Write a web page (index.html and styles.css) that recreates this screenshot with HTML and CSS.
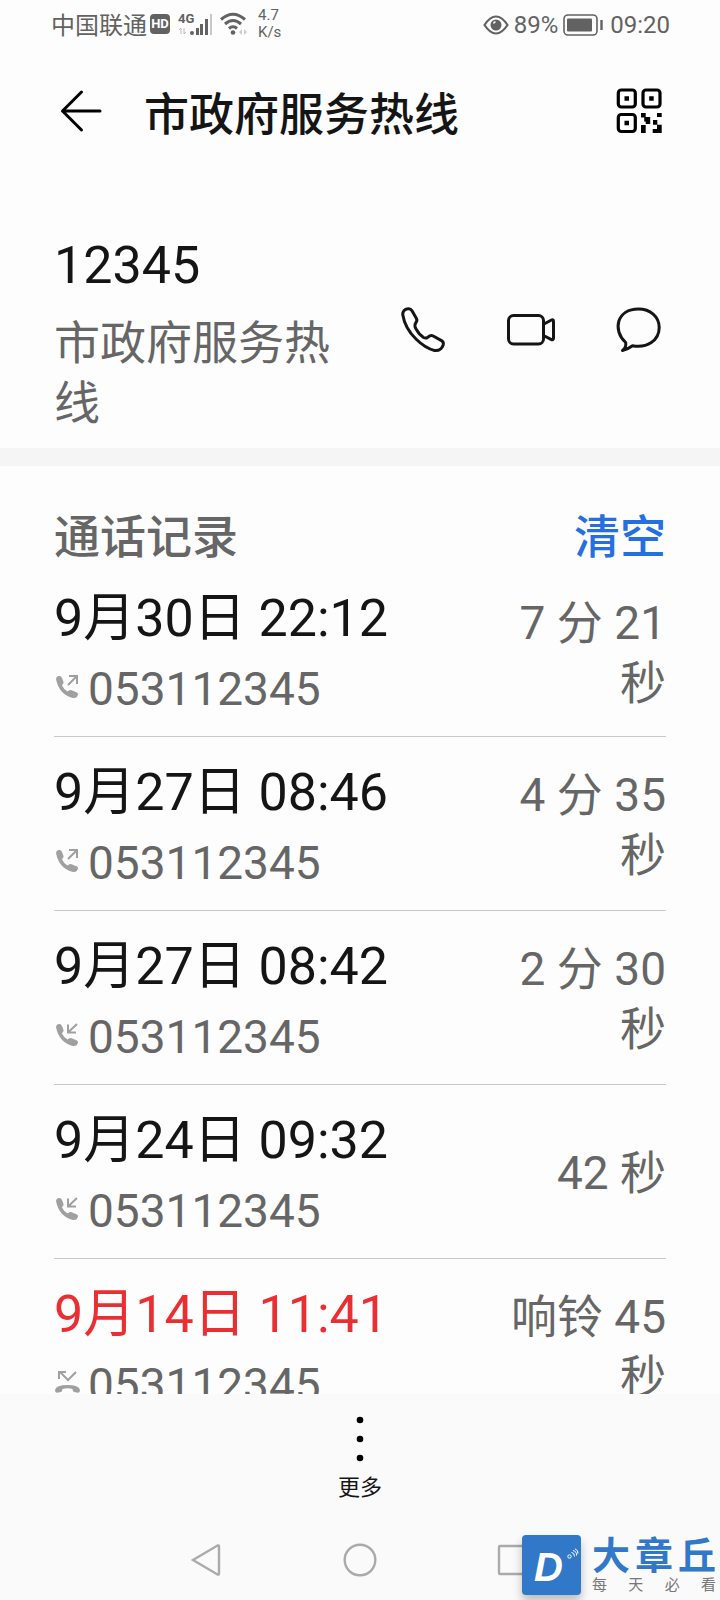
FILE: index.html
```html
<!DOCTYPE html>
<html lang="zh-CN">
<head>
<meta charset="utf-8">
<meta name="viewport" content="width=device-width, initial-scale=1">
<title>市政府服务热线</title>
<link rel="stylesheet" href="styles.css">
</head>
<body>
<div class="screen">
  <div class="status">
    <div class="status-group">
      <span class="carrier">中国联通</span>
      <span class="hd">HD</span>
      <svg class="signal" width="36" height="26" viewBox="0 0 36 26" aria-hidden="true">
        <text x="0" y="12" class="net">4G</text>
        <g fill="#626262"><circle cx="14" cy="22" r="2"/><rect x="18" y="17" width="3" height="7"/><rect x="22" y="13" width="3" height="11"/><rect x="27" y="8" width="3" height="16"/></g>
        <rect x="32" y="3" width="2" height="21" fill="#c8c8c8"/>
        <path d="M3 23v-6l-2 2M6 17v6l2-2" fill="none" stroke="#bbb"/>
      </svg>
      <svg class="wifi" width="28" height="24" viewBox="0 0 28 24" aria-hidden="true">
        <g fill="none" stroke="#626262" stroke-width="3"><path d="M1 7.500Q13-3 25 7.500"/><path d="M5 12Q13 5 21 12"/><path d="M9 16.500Q13 13 17 16.500"/></g>
        <circle cx="13" cy="20.500" r="2.300" fill="#626262"/>
        <path d="M22 17l-3 3 3 3zM24 17l3 3-3 3z" fill="#ccc"/>
      </svg>
      <span class="speed">4.7<br>K/s</span>
    </div>
    <div class="status-group right">
      <svg width="26" height="20" viewBox="0 0 26 20" aria-hidden="true"><path d="M1.500 10Q7 1.500 13 1.500T24.500 10Q19 18.500 13 18.500T1.500 10z" fill="none" stroke="#626262" stroke-width="2.200"/><circle cx="13" cy="10" r="5.500" fill="#626262"/><path d="M10.500 8.500a3 3 0 0 1 2-1.800" fill="none" stroke="#fff" stroke-width="1.500"/></svg>
      <span>89%</span>
      <svg width="40" height="22" viewBox="0 0 40 22" aria-hidden="true"><rect x="1" y="1" width="33" height="20" rx="4" fill="none" stroke="#626262" stroke-width="1.600"/><rect x="4" y="4.500" width="25" height="13" rx="1" fill="#626262"/><path d="M38.500 6v10" stroke="#626262" stroke-width="2.400"/></svg>
      <span class="clock">09:20</span>
    </div>
  </div>

  <header class="header">
    <button class="icon-btn" aria-label="返回"><svg viewBox="0 0 48 48"><path d="M27.500 4L8.500 23 27.500 42M8.500 23H46" stroke="#000" /></svg></button>
    <h1>市政府服务热线</h1>
    <button class="icon-btn" aria-label="二维码"><svg viewBox="0 0 48 48">
      <g stroke="#000" stroke-width="3.200"><rect x="2.300" y="2" width="17" height="17" rx="3"/><rect x="27" y="2" width="17" height="17" rx="3"/><rect x="2.300" y="26.500" width="17" height="17" rx="3"/></g>
      <path class="solid" d="M8.500 8.300h4.500v4.500h-4.500zM33.200 8.300h4.500v4.500h-4.500zM8.500 32.800h4.500v4.500h-4.500zM25 25h4.700v4h4.500v7h-4.500v9H25v-8h4.700v-3.500h-1.500v-4H25zM41 25h4.700v4H41zM37 32h4.300v4.700h4.400V45h-9v-4h4.300v-4.300h-4z"/>
    </svg></button>
  </header>

  <section class="contact">
    <div class="contact-info">
      <div class="number">12345</div>
      <div class="name">市政府服务热线</div>
    </div>
    <div class="actions">
      <button class="icon-btn" aria-label="拨打电话"><svg viewBox="0 0 48 48"><path d="M3.700 8.500Q4 3.500 8.800 2.800Q11.500 2.300 13 4.800L17.300 12.200Q18.500 14.300 17.200 16L16 18.500Q15.500 20.500 17 23Q20 28.500 24.500 31.500Q26.500 32.500 28 31.800L31 29.800Q32.500 29 34.200 30L42.500 34.600Q45 36.200 44.200 39Q42 45.300 35.500 44.500Q26 42 17 33Q6 22.500 3.700 8.500z"/></svg></button>
      <button class="icon-btn" aria-label="视频通话"><svg viewBox="0 0 48 48"><rect x="1.500" y="9.500" width="35" height="28.500" rx="5"/><path d="M36.500 18.300L44 14.300Q46.500 13 46.500 15.500V32Q46.500 34.500 44 33.300L36.500 29.500"/></svg></button>
      <button class="icon-btn" aria-label="发送信息"><svg viewBox="0 0 48 48"><path d="M10.700 36.500C-3 24 2 3 23.500 3C35 3 44.200 10.500 44.200 21.500C44.200 34.500 32 42.500 17.500 39.800Q12.500 43.500 7.500 44.500Q11.500 41.500 10.700 36.500z"/></svg></button>
    </div>
  </section>

  <main class="log">
    <div class="log-head"><h2>通话记录</h2><button class="clear">清空</button></div>
    <ul class="calls">
      <li class="call">
        <div class="call-main"><div class="date">9月30日 22:12</div><div class="line"><svg class="kind" viewBox="0 0 26 26" aria-label="呼出"><use href="#handset"/><path d="M14 12L23 3M15 3h8v8"/></svg><span>053112345</span></div></div>
        <div class="duration">7 分 21 秒</div>
      </li>
      <li class="call">
        <div class="call-main"><div class="date">9月27日 08:46</div><div class="line"><svg class="kind" viewBox="0 0 26 26" aria-label="呼出"><use href="#handset"/><path d="M14 12L23 3M15 3h8v8"/></svg><span>053112345</span></div></div>
        <div class="duration">4 分 35 秒</div>
      </li>
      <li class="call">
        <div class="call-main"><div class="date">9月27日 08:42</div><div class="line"><svg class="kind" viewBox="0 0 26 26" aria-label="呼入"><use href="#handset"/><path d="M23 3L14 11.500M14 3.500v8h8"/></svg><span>053112345</span></div></div>
        <div class="duration">2 分 30 秒</div>
      </li>
      <li class="call">
        <div class="call-main"><div class="date">9月24日 09:32</div><div class="line"><svg class="kind" viewBox="0 0 26 26" aria-label="呼入"><use href="#handset"/><path d="M23 3L14 11.500M14 3.500v8h8"/></svg><span>053112345</span></div></div>
        <div class="duration">42 秒</div>
      </li>
      <li class="call missed">
        <div class="call-main"><div class="date">9月14日 11:41</div><div class="line"><svg class="kind" viewBox="0 0 26 26" aria-label="未接"><path d="M22 3l-8 8-8-8M5 10V3h7"/><path class="solid" d="M1 21Q2 16 13.500 16T26 21q0 3-2 2.800l-4-.8q-1.500-.5-1.500-3-5-1.500-10 0 0 2.500-1.500 3l-4 .8Q1 24 1 21z"/></svg><span>053112345</span></div></div>
        <div class="duration">响铃 45 秒</div>
      </li>
    </ul>
  </main>

  <footer class="bottom">
    <button class="more">
      <svg width="8" height="46" viewBox="0 0 8 46" aria-hidden="true"><circle cx="4" cy="4" r="3.300"/><circle cx="4" cy="23" r="3.300"/><circle cx="4" cy="42" r="3.300"/></svg>
      <span>更多</span>
    </button>
    <nav class="nav">
      <button aria-label="后退"><svg viewBox="0 0 34 34"><path d="M4 17L28.500 2.500Q30 2 30 3.500v27q0 1.500-1.500 1z"/></svg></button>
      <button aria-label="主屏幕"><svg viewBox="0 0 34 34"><circle cx="17" cy="17" r="15.300"/></svg></button>
      <button aria-label="最近任务"><svg viewBox="0 0 34 34"><rect x="2" y="3" width="28" height="28" rx="1"/></svg></button>
    </nav>
  </footer>

  <div class="watermark">
    <div class="logo"><span>D</span><svg width="12" height="12" viewBox="0 0 12 12" aria-hidden="true"><circle cx="2.500" cy="8.500" r="1.700"/><path d="M4.500 4.500q3 0 3 4M6 2.500q4 1 3.500 5M8 .8q3.500 1.500 3 5"/></svg></div>
    <div class="brand">
      <div class="brand-name"><span>大</span><span>章</span><span>丘</span></div>
      <div class="slogan"><span>每</span><span>天</span><span>必</span><span>看</span></div>
    </div>
  </div>
</div>
<svg class="defs" aria-hidden="true"><symbol id="handset" viewBox="0 0 26 26"><path fill="#a0a0a0" stroke="none" d="M2 6Q2.500 2.500 6 3q1.300.3 2 2l1.500 4q.4 1.500-.8 2.300L8 12.500q1.500 3.500 5.500 6l1.500-1q1-.8 2.500-.3l5 2q1.800.7 1.500 2.300-1 4-5 3.500Q5 21.500 2 6z"/></symbol></svg>
</body>
</html>
```
FILE: styles.css
```css
* { box-sizing: border-box; }
body {
  margin: 0;
  background: #fdfdfd;
  color: #151515;
  font-family: Roboto, "Noto Sans CJK SC", sans-serif;
}
button {
  margin: 0;
  padding: 0;
  border: 0;
  background: none;
  color: inherit;
  font: inherit;
  cursor: pointer;
}
h1, h2, ul { margin: 0; padding: 0; }
svg { display: block; flex: none; }
.defs { position: absolute; width: 0; height: 0; }
.screen {
  position: relative;
  display: flex;
  flex-direction: column;
  height: 100vh;
  overflow: hidden;
}

.status {
  display: flex;
  justify-content: space-between;
  padding: 0 50px 0 51px;
  font-size: 24px;
  line-height: 48px;
  color: #626262;
}
.status-group { display: flex; align-items: center; height: 48px; }
.status-group.right { gap: 5px; padding-top: 1px; }
.carrier { padding-top: 4px; }
.clock { padding-left: 2px; }
.hd {
  width: 20px;
  margin: 0 8px 0 3px;
  border-radius: 4px;
  background: #626262;
  color: #fff;
  font-size: 13px;
  font-weight: 700;
  line-height: 20px;
  text-align: center;
}
.net { font: 700 13px "Roboto", sans-serif; fill: #626262; }
.wifi { margin: 0 10px 0 6px; }
.speed { font-size: 15px; line-height: 17px; }

.header {
  display: flex;
  align-items: center;
  padding: 36px 56px 36px 54px;
}
.header h1 {
  flex: 1;
  margin-left: 42px;
  padding-top: 8px;
  font-size: 45px;
  font-weight: 500;
  line-height: 48px;
}
.icon-btn { width: 48px; height: 48px; }
.icon-btn svg {
  width: 48px;
  height: 48px;
  fill: none;
  stroke: #151515;
  stroke-width: 3;
  stroke-linecap: round;
  stroke-linejoin: round;
}
.icon-btn .solid { fill: #000; stroke: none; }

.contact {
  display: flex;
  align-items: center;
  gap: 40px;
  padding: 60px 57px 15px 54px;
  border-bottom: 18px solid #f5f5f5;
}
.contact-info { flex: 1; }
.number { margin-bottom: 17px; font-size: 52px; line-height: 60px; }
.name { color: #666; font-size: 46px; line-height: 60px; }
.actions { display: flex; gap: 60px; padding-bottom: 10px; }

.log { flex: 1; min-height: 0; overflow: hidden; padding: 0 54px; }
.log-head {
  display: flex;
  justify-content: space-between;
  padding: 41px 0 0;
  font-size: 46px;
  line-height: 60px;
}
.log-head h2 { color: #666; font-size: inherit; font-weight: 500; }
.clear { color: #256fe0; font-weight: 500; }
.calls { list-style: none; }
.call {
  display: flex;
  align-items: center;
  justify-content: space-between;
  padding: 21px 0 17px;
  border-bottom: 1px solid #c8c8c8;
}
.calls .call:first-child { padding-top: 20px; }
.call + .call { padding-top: 24px; }
.date { margin-bottom: 8px; font-size: 52px; line-height: 64px; }
.missed .date { color: #ea2f33; }
.line {
  display: flex;
  align-items: center;
  gap: 8px;
  color: #666;
  font-size: 46px;
  line-height: 60px;
}
.kind {
  width: 26px;
  height: 26px;
  margin-bottom: 6px;
  fill: none;
  stroke: #a0a0a0;
  stroke-width: 2;
}
.kind .solid { fill: #a0a0a0; stroke: none; }
.duration {
  width: 170px;
  padding-bottom: 4px;
  color: #666;
  font-size: 46px;
  line-height: 60px;
  text-align: right;
}
.call:first-child .duration { padding-bottom: 0; }

.bottom { padding: 22px 0 23px; background: #fafafa; }
.more {
  display: flex;
  flex-direction: column;
  align-items: center;
  gap: 10px;
  margin: 0 auto;
  font-size: 22px;
  line-height: 32px;
}
.nav {
  display: flex;
  justify-content: center;
  gap: 120px;
  padding-top: 39px;
}
.nav svg {
  width: 34px;
  height: 34px;
  fill: none;
  stroke: #aaa;
  stroke-width: 2.4;
}

.watermark {
  position: absolute;
  right: 4px;
  bottom: 5px;
  display: flex;
  align-items: center;
  gap: 11px;
}
.logo {
  position: relative;
  width: 59px;
  height: 60px;
  border-radius: 4px;
  background: #3278c8;
  box-shadow: 0 6px 10px rgba(0, 0, 0, 0.25);
  color: #fff;
  font: italic 700 40px/64px "Liberation Sans", sans-serif;
  padding-left: 12px;
}
.logo svg {
  position: absolute;
  top: 13px;
  right: 2px;
  fill: none;
  stroke: #fff;
}
.brand-name {
  display: flex;
  gap: 5px;
  color: #3278c8;
  font-size: 38px;
  font-weight: 700;
  line-height: 40px;
}
.slogan {
  display: flex;
  justify-content: space-between;
  color: #777;
  font-size: 15px;
  line-height: 18px;
}
```
